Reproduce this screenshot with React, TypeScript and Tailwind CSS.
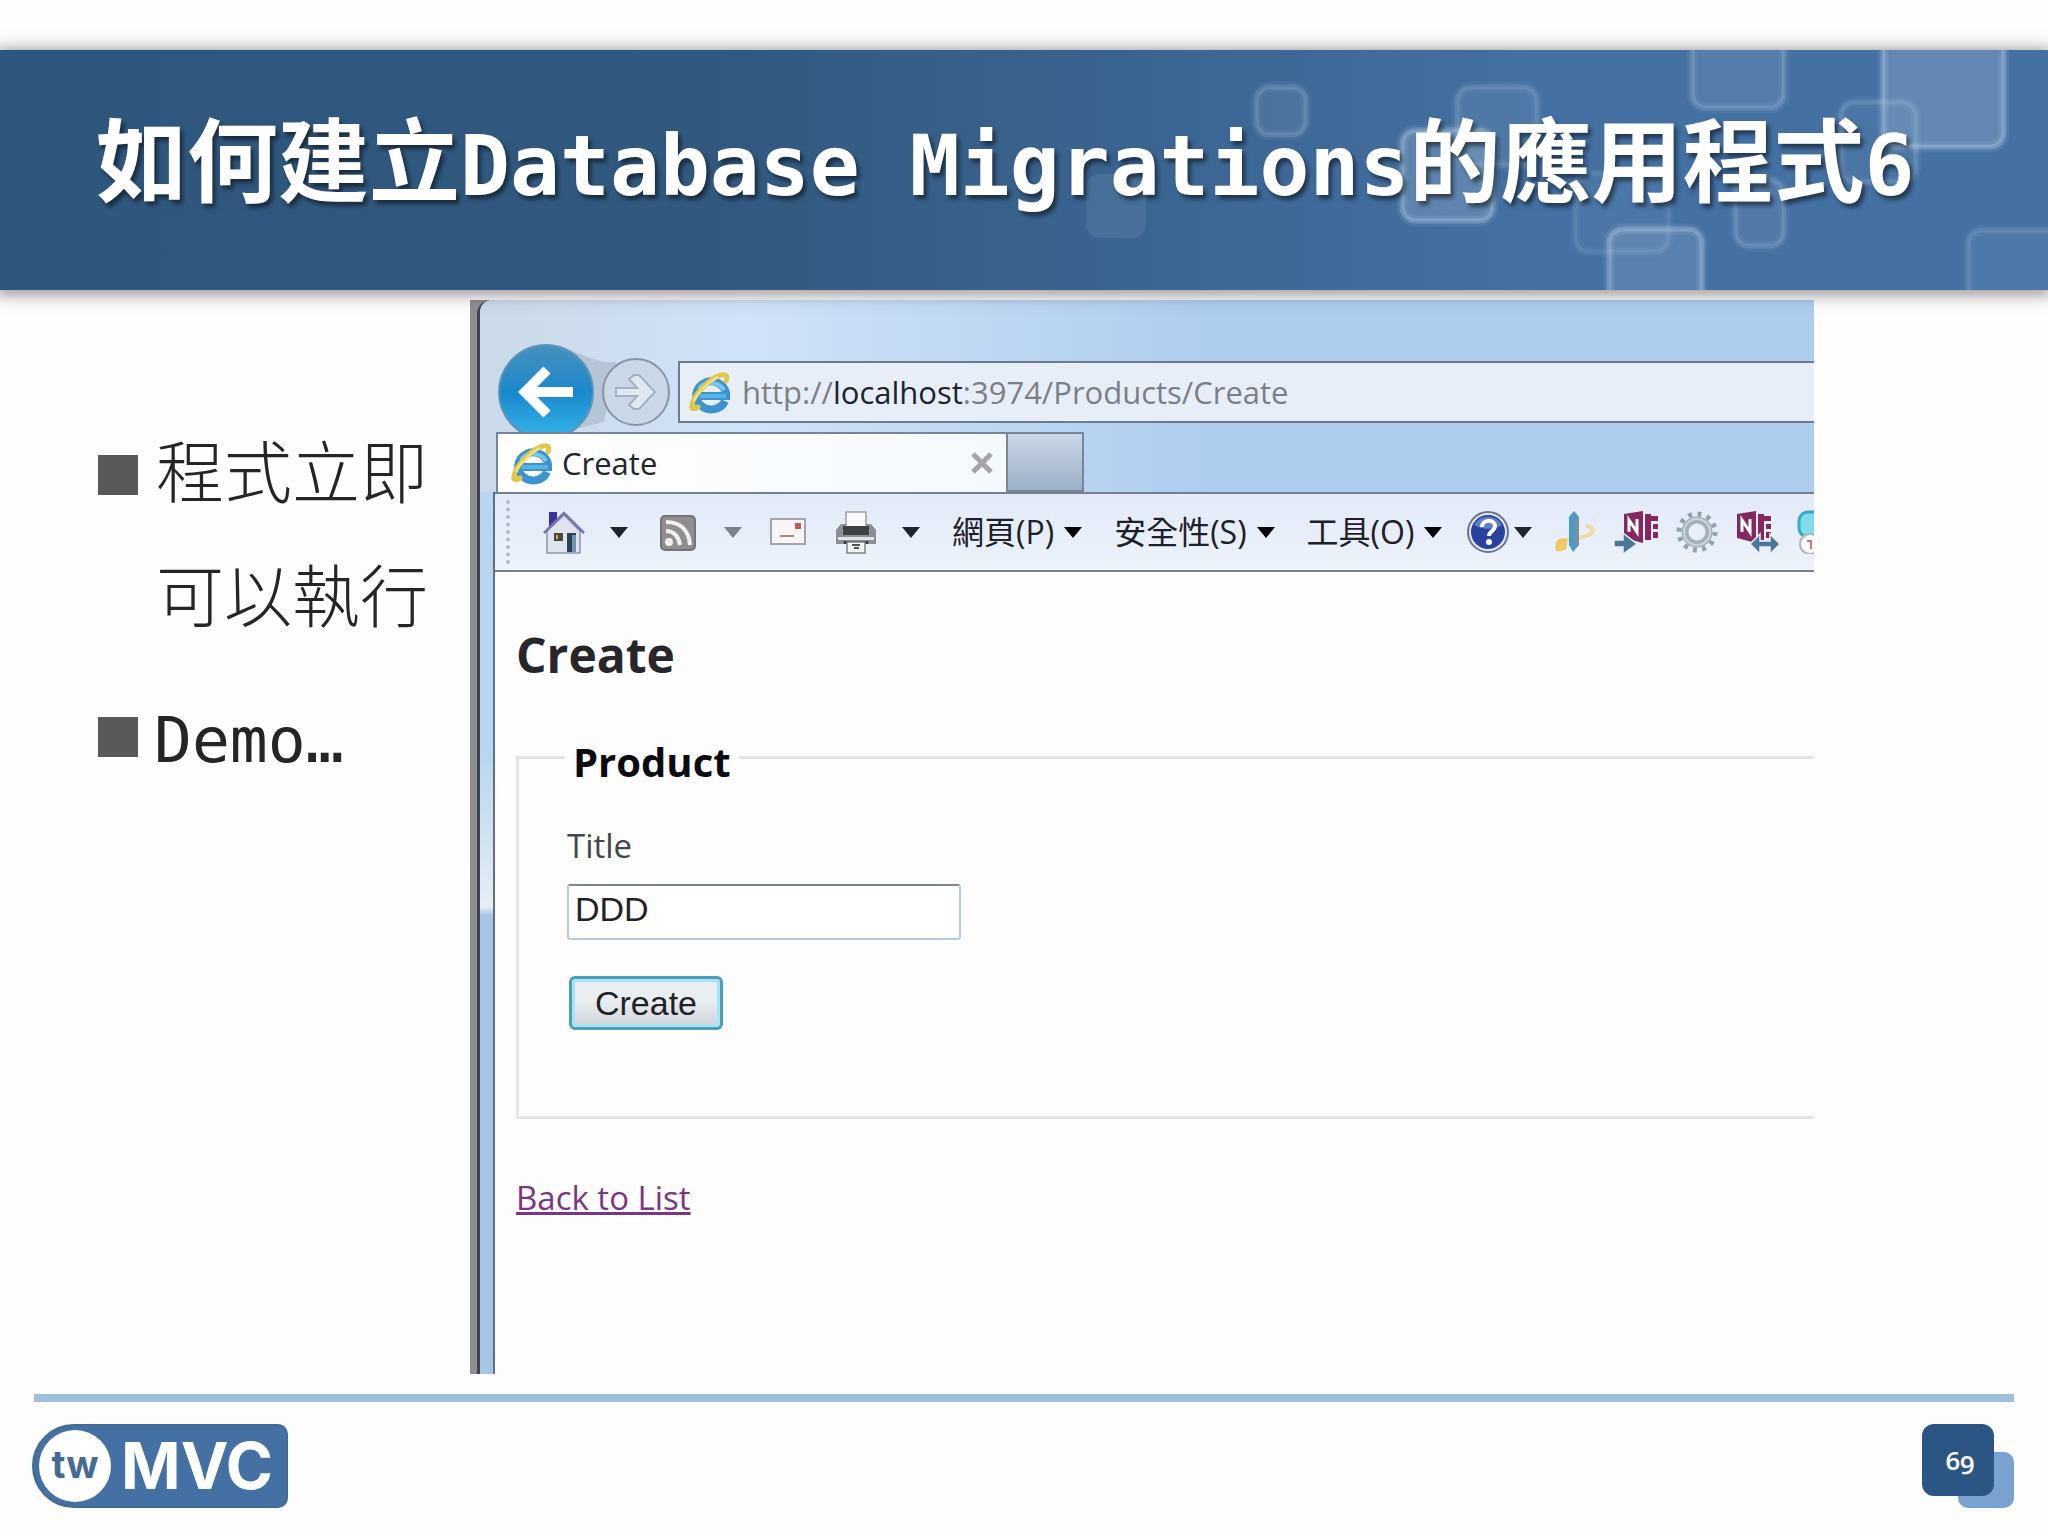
import { useState } from "react";

interface Square {
  x: number;
  y: number;
  w: number;
  h: number;
  fill: number;
  line: number;
}

const SQUARES: Square[] = [
  { x: 1086, y: 174, w: 60, h: 64, fill: 0.1, line: 0 },
  { x: 1256, y: 87, w: 50, h: 48, fill: 0.09, line: 0.15 },
  { x: 1457, y: 87, w: 80, h: 78, fill: 0.09, line: 0.13 },
  { x: 1402, y: 130, w: 91, h: 91, fill: 0.22, line: 0.24 },
  { x: 1692, y: 10, w: 92, h: 98, fill: 0.13, line: 0.16 },
  { x: 1841, y: 102, w: 75, h: 80, fill: 0.05, line: 0.14 },
  { x: 1883, y: 10, w: 121, h: 137, fill: 0.22, line: 0.25 },
  { x: 1575, y: 173, w: 94, h: 79, fill: 0.06, line: 0.09 },
  { x: 1609, y: 229, w: 93, h: 120, fill: 0.16, line: 0.25 },
  { x: 1735, y: 180, w: 49, h: 66, fill: 0.1, line: 0.15 },
  { x: 1968, y: 230, w: 120, h: 120, fill: 0.08, line: 0.12 },
];

function HeaderSquares() {
  return (
    <svg
      className="absolute inset-0 w-full h-full"
      viewBox="0 50 2048 240"
      preserveAspectRatio="xMaxYMid slice"
      aria-hidden="true"
    >
      {SQUARES.map((s) => (
        <g key={`${s.x}-${s.y}`}>
          <rect x={s.x} y={s.y} width={s.w} height={s.h} rx="14" fill="#c8dcec" fillOpacity={s.fill} />
          <rect
            x={s.x}
            y={s.y}
            width={s.w}
            height={s.h}
            rx="14"
            fill="none"
            stroke="#cfe4f5"
            strokeOpacity={s.line * 0.4}
            strokeWidth="11"
          />
          <rect
            x={s.x}
            y={s.y}
            width={s.w}
            height={s.h}
            rx="14"
            fill="none"
            stroke="#cfe4f5"
            strokeOpacity={s.line}
            strokeWidth="5"
          />
        </g>
      ))}
    </svg>
  );
}

function IeLogo() {
  return (
    <svg width="44" height="44" viewBox="0 0 44 44" aria-hidden="true" className="shrink-0">
      <path d="M37 31a15 14 0 1 1 1-8v3H13" fill="none" stroke="#3c93cf" strokeWidth="8" />
      <path d="M36 20a14 12 0 0 0-25-1" fill="none" stroke="#79c6ee" strokeWidth="4" />
      <path d="M12 26h26" stroke="#55b4e6" strokeWidth="4" />
      <path
        d="M38 11c2-5 0-7-5-6C22 8 6 24 4 35c-1 4 2 5 6 2"
        fill="none"
        stroke="#dfc84a"
        strokeWidth="5"
        strokeLinecap="round"
      />
      <path d="M30 7C20 12 9 23 6 31" fill="none" stroke="#f3e68a" strokeWidth="2" />
    </svg>
  );
}

function Caret({ className }: { className: string }) {
  return (
    <svg width="18" height="11" viewBox="0 0 18 11" aria-hidden="true" className={className}>
      <path d="M0 0h18L9 11z" fill="currentColor" />
    </svg>
  );
}

function HomeIcon() {
  return (
    <svg width="44" height="44" viewBox="0 0 44 44" aria-hidden="true">
      <path d="M7 2h8v12l-8 6z" fill="#3a33a0" />
      <path d="M5 21L22 5l16 16v22H5z" fill="#dfe3ee" stroke="#8d94ac" strokeWidth="1.5" />
      <path d="M2 23L22 3l20 20" fill="none" stroke="#7775ad" strokeWidth="2.5" />
      <path d="M12 23h9v8h-9z" fill="#4c4a38" />
      <path d="M14 25h2v4h-2z" fill="#c6b257" />
      <path d="M25 23h9v19h-9z" fill="#2d4257" />
      <path d="M30 25h4v17h-4z" fill="#6d93ad" />
    </svg>
  );
}

function RssIcon() {
  return (
    <svg width="44" height="44" viewBox="0 0 44 44" aria-hidden="true">
      <rect x="5" y="6" width="34" height="34" rx="4" fill="#8f8f8f" stroke="#747474" strokeWidth="2" />
      <path d="M10 12c15 0 23 9 24 23M10 21c8 0 13 6 14 14" fill="none" stroke="#f1f1f1" strokeWidth="4" />
      <circle cx="13" cy="32" r="4" fill="#f1f1f1" />
    </svg>
  );
}

function MailIcon() {
  return (
    <svg width="36" height="28" viewBox="0 0 36 28" aria-hidden="true">
      <rect x="1" y="1" width="34" height="25" fill="#f8f5f6" stroke="#a5a3a8" strokeWidth="2" />
      <path d="M25 5h6v6h-6z" fill="#bf5a5a" />
      <path d="M10 18h14" stroke="#a9897f" strokeWidth="2" />
    </svg>
  );
}

function PrinterIcon() {
  return (
    <svg width="44" height="44" viewBox="0 0 44 44" aria-hidden="true">
      <path d="M12 2h20v15H12z" fill="#fafafa" stroke="#9b9ea3" strokeWidth="1.5" />
      <path d="M7 14h5v4h20v-4h5l5 6v14H2V20z" fill="#8b8f93" />
      <path d="M9 16h26v9H9z" fill="#3d4144" />
      <path d="M4 27h36v3H4z" fill="#dfe2e4" />
      <path d="M10 31h24v3H10z" fill="#2b3a39" />
      <path d="M13 32h18v11H13z" fill="#f4f6f6" stroke="#7c8283" strokeWidth="1.5" />
      <path d="M18 35h8M20 38h5" stroke="#4b5a58" strokeWidth="2" />
    </svg>
  );
}

function HelpIcon() {
  return (
    <svg width="44" height="44" viewBox="0 0 44 44" aria-hidden="true">
      <circle cx="22" cy="22" r="20" fill="#e4e8f4" stroke="#6c7391" strokeWidth="2" />
      <circle cx="22" cy="22" r="17" fill="#27439f" />
      <path d="M8 15a16 16 0 0 1 28 0c-9 5-19 5-28 0z" fill="#5f80c8" />
      <path d="M16 17c0-8 13-8 13-1 0 5-6 5-6 10" fill="none" stroke="#fff" strokeWidth="4" />
      <circle cx="23" cy="32" r="3" fill="#fff" />
    </svg>
  );
}

function PencilIcon() {
  return (
    <svg width="44" height="44" viewBox="0 0 44 44" aria-hidden="true">
      <path
        d="M5 41c-3-6 1-10 7-11 8-1 16-2 24-5 6-3 5-8-3-9"
        fill="none"
        stroke="#f0dba6"
        strokeWidth="4"
      />
      <path d="M3 32c4-5 9-4 11-2v8c-4 4-8 4-11 2z" fill="#eec04e" fillOpacity="0.8" />
      <path d="M16 7l5-6 5 6v28l-6 7-4-7z" fill="#4a9cc4" />
      <path d="M22 8h4v27h-4z" fill="#7f8fa3" />
    </svg>
  );
}

function NoteBook({ x }: { x: number }) {
  return (
    <g transform={`translate(${x} 0)`}>
      <path d="M2 4l19-3v32L2 28z" fill="#852862" />
      <path d="M23 4h6v26h-6z" fill="#852862" />
      <path d="M29 6h7v5h-7zM31 14h5v5h-5zM31 22h5v6h-5z" fill="#852862" />
      <path d="M7 22V10l8 12V9" fill="none" stroke="#fff" strokeWidth="3" />
    </g>
  );
}

function SendNoteIcon() {
  return (
    <svg width="44" height="44" viewBox="0 0 44 44" aria-hidden="true">
      <NoteBook x={8} />
      <path d="M0 30h9v-7l14 11-14 10v-7H0z" fill="#4a7699" stroke="#eaf0f9" strokeWidth="1.5" />
    </svg>
  );
}

function LinkNoteIcon() {
  return (
    <svg width="44" height="44" viewBox="0 0 44 44" aria-hidden="true">
      <NoteBook x={-1} />
      <path d="M14 34l10-10v7h10v-7l10 10-10 10v-7H24v7z" fill="#4a7699" stroke="#eaf0f9" strokeWidth="1.5" />
    </svg>
  );
}

function GearIcon() {
  return (
    <svg width="44" height="44" viewBox="0 0 44 44" aria-hidden="true">
      <circle cx="22" cy="22" r="18" fill="none" stroke="#93a2ac" strokeWidth="5" strokeDasharray="4 5.42" />
      <circle cx="22" cy="22" r="12" fill="none" stroke="#a3b1ba" strokeWidth="7" />
      <circle cx="22" cy="22" r="13" fill="none" stroke="#ccd6dc" strokeWidth="2" />
    </svg>
  );
}

function ChatIcon() {
  return (
    <svg width="44" height="44" viewBox="0 0 44 44" aria-hidden="true">
      <rect x="2" y="2" width="38" height="25" rx="9" fill="#7edcec" stroke="#36a9cb" strokeWidth="3" />
      <circle cx="13" cy="34" r="10" fill="#fbfbfb" stroke="#b4b4b8" strokeWidth="2" />
      <path d="M10 31h4v8" fill="none" stroke="#c27a6c" strokeWidth="2" />
    </svg>
  );
}

const MENUS = ["網頁(P)", "安全性(S)", "工具(O)"];

const ADDONS = [
  { label: "Pencil", icon: PencilIcon },
  { label: "Send to notebook", icon: SendNoteIcon },
  { label: "Settings", icon: GearIcon },
  { label: "Linked notes", icon: LinkNoteIcon },
  { label: "Chat", icon: ChatIcon },
];

function NavigationBar() {
  return (
    <div className="flex items-center pt-11 pl-[18px]">
      <div className="relative flex items-center gap-2 shrink-0">
        <svg className="absolute left-0 top-0" width="172" height="96" viewBox="0 0 172 96" aria-hidden="true">
          <path d="M60 2c26 8 40 18 58 16l-12 60-40 10z" fill="#b5c5d6" />
        </svg>
        <button
          aria-label="Back"
          className="relative w-24 h-24 rounded-full border-2 border-[#5f93b8] bg-linear-to-b from-[#4590bd] via-[#1988cc] to-[#35b4ea] flex items-center justify-center"
        >
          <svg width="58" height="52" viewBox="0 0 58 52" aria-hidden="true">
            <path d="M30 4L8 26l22 22M8 26h48" fill="none" stroke="#fff" strokeWidth="10" />
          </svg>
        </button>
        <button
          aria-label="Forward"
          className="relative w-[68px] h-[68px] rounded-full border-2 border-[#8795a8] bg-[#c9d7e6] flex items-center justify-center"
        >
          <svg width="44" height="38" viewBox="0 0 44 38" aria-hidden="true">
            <path
              d="M2 15h21l-8-9 5-4h5l16 17-16 17h-5l-5-4 8-9H2z"
              fill="#dfe8f1"
              stroke="#a3b2c3"
              strokeWidth="2"
            />
          </svg>
        </button>
      </div>
      <div className="flex-1 ml-2 h-[62px] border-2 border-r-0 border-[#6b7b8e] bg-[#e8eef8] flex items-center gap-[10px] px-2 text-[31px] leading-none text-[#7b8088] whitespace-nowrap">
        <IeLogo />
        <span>
          http://<span className="text-[#1c2430]">localhost</span>:3974/Products/Create
        </span>
      </div>
    </div>
  );
}

function TabStrip() {
  return (
    <div className="relative -mt-2 flex h-[60px] ml-4">
      <div className="w-[512px] border-2 border-b-0 border-[#75869a] bg-linear-to-r from-white to-[#f4f9fd] flex items-center gap-2 pl-3 pr-3">
        <IeLogo />
        <span className="text-[31px] leading-none text-[#22262c]">Create</span>
        <button aria-label="Close tab" className="ml-auto">
          <svg width="24" height="24" viewBox="0 0 24 24" aria-hidden="true">
            <path d="M3 3l18 18M21 3L3 21" stroke="#a3a5a8" strokeWidth="5" />
          </svg>
        </button>
      </div>
      <button
        aria-label="New tab"
        className="w-[76px] border-2 border-l-0 border-[#75869a] bg-linear-to-b from-[#c9d7e7] to-[#9db0c6]"
      />
    </div>
  );
}

function CommandBar() {
  return (
    <div className="h-20 border-y-2 border-[#75818f] bg-linear-to-b from-[#e2eafa] to-[#edf3fa] flex items-center overflow-hidden">
      <span className="w-0 h-16 ml-[11px] border-l-4 border-dotted border-[#b4bac6]" />
      <div className="flex items-center gap-7 ml-8 shrink-0">
        <button aria-label="Home" className="flex items-center gap-6">
          <HomeIcon />
          <Caret className="text-[#20242c]" />
        </button>
        <button aria-label="Feeds" className="flex items-center gap-6">
          <RssIcon />
          <Caret className="text-[#7c828c]" />
        </button>
        <button aria-label="Mail">
          <MailIcon />
        </button>
        <button aria-label="Print" className="flex items-center gap-6">
          <PrinterIcon />
          <Caret className="text-[#20242c]" />
        </button>
      </div>
      <div className="flex items-center gap-8 ml-8 shrink-0">
        {MENUS.map((menu) => (
          <button
            key={menu}
            className="flex items-center gap-[10px] text-[32px] leading-none text-[#1d2129] whitespace-nowrap"
          >
            {menu}
            <Caret className="text-black" />
          </button>
        ))}
      </div>
      <div className="flex items-center gap-[17px] ml-6 shrink-0">
        <button aria-label="Help" className="flex items-center gap-1 mr-1">
          <HelpIcon />
          <Caret className="text-[#20242c]" />
        </button>
        {ADDONS.map((addon) => {
          const Icon = addon.icon;
          return (
            <button key={addon.label} aria-label={addon.label}>
              <Icon />
            </button>
          );
        })}
      </div>
    </div>
  );
}

function CreateForm() {
  const [title, setTitle] = useState("DDD");

  return (
    <div className="flex-1 bg-[#fdfdfe] pl-[21px] pt-[51px]">
      <h2 className="text-[48px] leading-[64px] font-bold text-[#26262b]">Create</h2>
      <form className="mt-[39px]" onSubmit={(e) => e.preventDefault()}>
        <fieldset className="border-[3px] border-r-0 border-[#e6e3ec] pl-12 pb-[86px]">
          <legend className="px-2 pt-[10px] -ml-[2px] text-[40px] leading-[52px] font-bold text-[#0c0c10]">
            Product
          </legend>
          <label htmlFor="title" className="block mt-9 text-[33px] leading-[44px] text-[#45454a]">
            Title
          </label>
          <input
            id="title"
            type="text"
            value={title}
            onChange={(e) => setTitle(e.target.value)}
            className="block mt-4 w-[394px] h-14 px-[6px] pb-[6px] rounded-[3px] border-2 border-[#b9cbd8] border-t-[#7c8891] bg-white font-['Liberation_Sans',sans-serif] text-[34px] text-[#222226]"
          />
          <button
            type="submit"
            className="block mt-9 ml-[2px] w-[154px] h-[54px] rounded-md border-[3px] border-[#4f9db8] bg-linear-to-b from-[#e9eef1] from-45% to-[#cdd3da] shadow-[inset_0_0_0_3px_#a8e4f5] font-['Liberation_Sans',sans-serif] text-[34px] leading-none text-[#222226]"
          >
            Create
          </button>
        </fieldset>
      </form>
      <a href="#list" className="inline-block mt-[53px] text-[33px] leading-[52px] underline text-[#7a3583]">
        Back to List
      </a>
    </div>
  );
}

function BrowserWindow() {
  return (
    <section className="flex-1 min-w-0 mr-[234px] flex bg-[#8f8d90] pl-[7px] overflow-hidden font-['Open_Sans','Noto_Sans_CJK_TC',sans-serif]">
      <div className="flex-1 min-w-0 flex flex-col rounded-tl-[14px] border-l-[3px] border-[#3c4653] bg-[#b5d3ee]">
        <div className="rounded-tl-xl bg-linear-to-r from-[#cbdae9] via-[#d0e2f8] via-20% to-[#adcdef] to-55%">
          <NavigationBar />
          <TabStrip />
        </div>
        <div className="flex-1 flex bg-linear-to-b from-[#b9d6ee] from-30% via-[#e6edf5] via-47% to-[#a6c5e4] to-48%">
          <div className="flex-1 min-w-0 ml-[13px] border-l-2 border-[#5f7085] flex flex-col">
            <CommandBar />
            <CreateForm />
          </div>
        </div>
      </div>
    </section>
  );
}

function TwMvcLogo() {
  return (
    <div className="w-64 h-[84px] rounded-l-[42px] rounded-r-[10px] bg-[#4470a3] border-2 border-[#456a94] flex items-center gap-[10px] pl-[5px] font-['Inter',sans-serif] font-bold leading-none">
      <span className="w-[72px] h-[72px] rounded-full bg-white flex items-center justify-center pb-1 text-[38px] text-[#456a94]">
        tw
      </span>
      <span className="text-[64px] text-white">MVC</span>
    </div>
  );
}

function PageNumber() {
  return (
    <div className="relative w-[92px] h-[84px]">
      <span className="absolute right-0 bottom-0 w-14 h-14 rounded-[10px] bg-[#7aa2d0]" />
      <span className="relative w-[72px] h-[72px] rounded-xl bg-[#2b5582] flex items-center justify-center pl-1 font-['Open_Sans',sans-serif] oldstyle-nums font-semibold text-[26px] leading-none text-white">
        69
      </span>
    </div>
  );
}

export default function App() {
  return (
    <div className="min-h-screen flex flex-col bg-[#fdfdfd] pt-[50px]">
      <header className="relative z-10 h-60 bg-linear-to-r from-[#2f567c] via-[#31597f] via-35% to-[#4470a2] to-75% shadow-[0_2px_14px_3px_rgba(60,50,60,0.5)]">
        <HeaderSquares />
        <h1 className="relative px-24 pt-[45px] flex items-baseline whitespace-nowrap text-[91px] leading-[120px] font-bold text-white font-['Noto_Sans_CJK_TC',sans-serif] text-shadow-[3px_4px_4px_rgb(0_0_0_/_0.5)]">
          如何建立
          <span className="font-['DejaVu_Sans_Mono',monospace] text-[83px] whitespace-pre">Database Migrations</span>
          的應用程式
          <span className="font-['DejaVu_Sans_Mono',monospace] text-[83px]">6</span>
        </h1>
      </header>

      <main className="flex-1 flex pt-[10px]">
        <ul className="w-[470px] shrink-0 pl-[98px] pt-[107px] flex flex-col gap-6 text-[68px] leading-[124px] text-[#252527]">
          <li className="flex gap-[18px]">
            <span className="w-10 h-10 mt-12 shrink-0 bg-[#5a585b]" />
            <span className="font-['Noto_Sans_CJK_TC',sans-serif] font-light">
              程式立即
              <br />
              可以執行
            </span>
          </li>
          <li className="flex gap-4">
            <span className="w-10 h-10 mt-[38px] shrink-0 bg-[#5a585b]" />
            <span className="font-['DejaVu_Sans_Mono',monospace] text-[63px]">Demo…</span>
          </li>
        </ul>
        <BrowserWindow />
      </main>

      <footer className="pt-5 pl-8 pr-[34px] pb-7">
        <div className="h-2 ml-[2px] bg-[#a0c1dc]" />
        <div className="mt-[22px] flex justify-between">
          <TwMvcLogo />
          <PageNumber />
        </div>
      </footer>
    </div>
  );
}
